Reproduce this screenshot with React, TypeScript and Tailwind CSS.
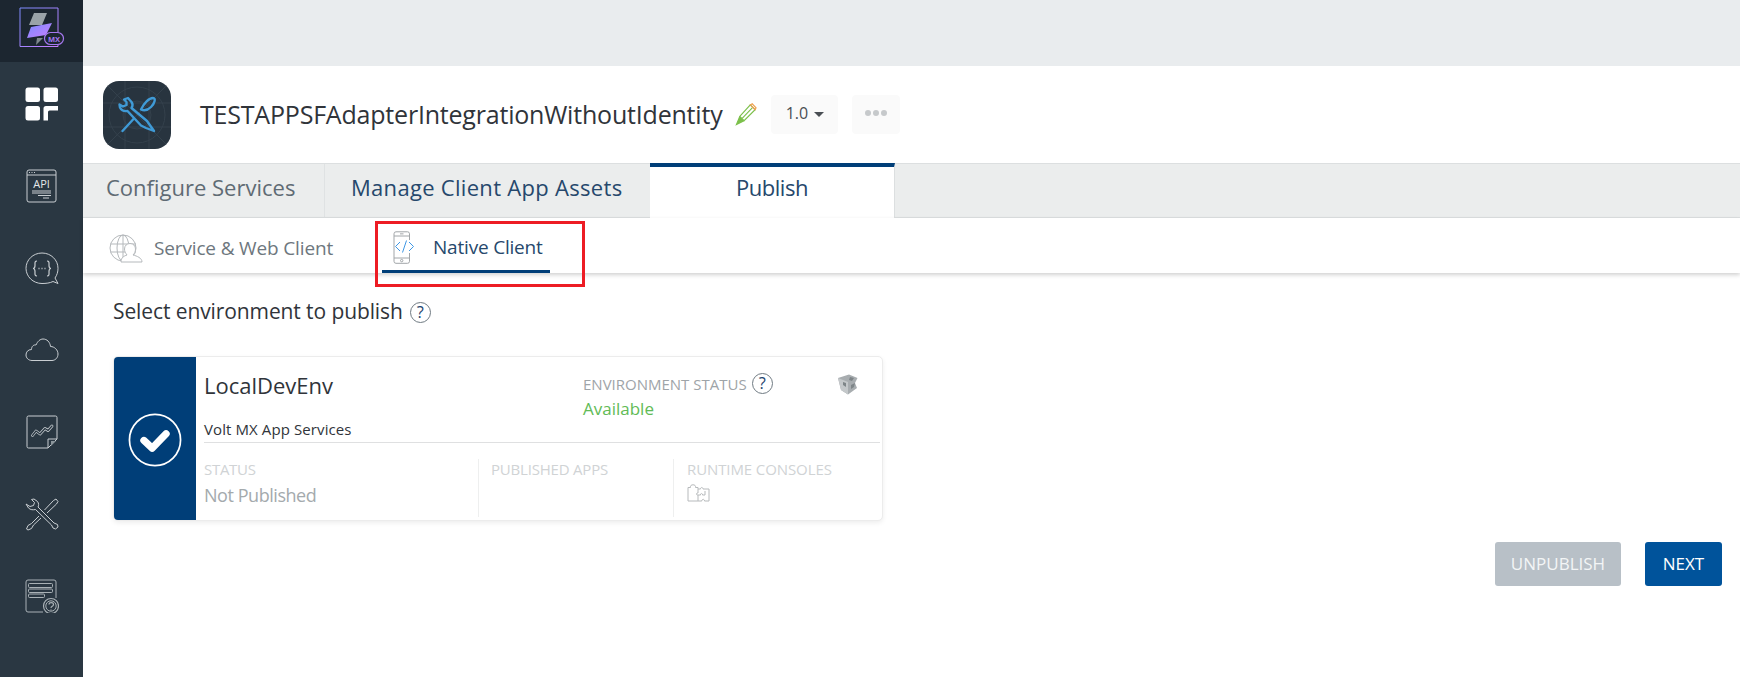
import React from "react";

const Stroke = "#c9ced2";

function Logo() {
  return (
    <svg width="46" height="42" viewBox="0 0 46 42" fill="none">
      <defs>
        <linearGradient id="lg" x1="0" y1="0" x2="1" y2="1">
          <stop offset="0" stopColor="#7c8cff" />
          <stop offset="1" stopColor="#c77dff" />
        </linearGradient>
      </defs>
      <path d="M1 1H39V27M39 38V39.500H1V1" stroke="url(#lg)" strokeWidth="1" />
      <path d="M15 6H28L23 18H10Z" fill="#9aa3a8" />
      <path d="M12 20L33 16L27 28L8 31Z" fill="url(#lg)" />
      <path d="M18 31H24L17 38Z" fill="#7f888d" />
      <rect x="25.500" y="25.500" width="19" height="12" rx="6" fill="#1c2630" stroke="#a678f0" strokeWidth="1.200" />
      <text x="35" y="34.500" textAnchor="middle" fontSize="7.500" fontWeight="700" fill="#a678f0" fontFamily="Open Sans">MX</text>
    </svg>
  );
}

function DashIcon() {
  return (
    <svg width="34" height="34" viewBox="0 0 34 34" fill="#fff">
      <rect x="0.500" y="0.500" width="14.500" height="14.500" rx="2.500" />
      <rect x="18.500" y="0.500" width="14.500" height="14.500" rx="2.500" />
      <rect x="0.500" y="19" width="14.500" height="14.500" rx="2.500" />
      <path d="M18.500 33.500V21.500a2.500 2.500 0 0 1 2.500-2.500H33v4.500H24.500a1.500 1.500 0 0 0-1.500 1.500v8.500Z" />
    </svg>
  );
}

function ApiIcon() {
  return (
    <svg width="32" height="34" viewBox="0 0 32 34" fill="none" stroke={Stroke} strokeWidth="1">
      <rect x="1" y="1" width="29" height="32" rx="2" />
      <path d="M1 6H30" />
      <path d="M3 3.500H4M5.500 3.500H6.500M8 3.500H9" strokeWidth="1.200" />
      <text x="15.500" y="19" textAnchor="middle" fontSize="11" fill="#e3e6e8" stroke="none" fontFamily="Open Sans">API</text>
      <path d="M6 22H25M6 24H25M12 26.500H25M17 29H23" />
    </svg>
  );
}

function BraceIcon() {
  return (
    <svg width="34" height="33" viewBox="0 0 34 33" fill="none" stroke={Stroke} strokeWidth="1">
      <path d="M33 31.500L28 29.500C25 31 21 31.500 17 31.500C8 31.500 1 24.500 1 16.250C1 8 8 1 17 1C26 1 33 8 33 16.250C33 20 32 23 30 26L33 31.500Z" />
      <path d="M12 9C9.500 9 10 11 10 13.500C10 15.500 9.500 16.500 8 16.500C9.500 16.500 10 17.500 10 19.500C10 22 9.500 24 12 24" strokeWidth="1.200" />
      <path d="M22 9C24.500 9 24 11 24 13.500C24 15.500 24.500 16.500 26 16.500C24.500 16.500 24 17.500 24 19.500C24 22 24.500 24 22 24" strokeWidth="1.200" />
      <path d="M13.500 16.500H14.500M16.500 16.500H17.500M19.500 16.500H20.500" strokeWidth="1.300" />
    </svg>
  );
}

function CloudIcon() {
  return (
    <svg width="34" height="24" viewBox="0 0 34 24" fill="none" stroke={Stroke} strokeWidth="1">
      <path d="M7 22.500C3.500 22.500 1 20 1 17C1 14 3 11.500 6.500 11.500C6.500 8 9 6.500 11 7C12.500 3.500 15 1 18 1C22 1 25 4 25.500 8.500C29.500 8.500 33 12 33 16C33 20 30 22.500 27 22.500Z" />
    </svg>
  );
}

function ReportIcon() {
  return (
    <svg width="32" height="34" viewBox="0 0 32 34" fill="none" stroke={Stroke} strokeWidth="1">
      <path d="M22 33H2.500A1.500 1.500 0 0 1 1 31.500V2.500A1.500 1.500 0 0 1 2.500 1H29.500A1.500 1.500 0 0 1 31 2.500V24Z" />
      <path d="M22 33V24H31" />
      <path d="M25 31L30 26H25Z" fill="#8b959b" stroke="none" />
      <path d="M6.500 20.500L10 16L14 19L19 13.500L22 15.500L26 11" strokeWidth="2.800" stroke="#c9ced2" strokeLinejoin="round" strokeLinecap="round" />
      <path d="M6.500 20.500L10 16L14 19L19 13.500L22 15.500L26 11" strokeWidth="1.300" stroke="#2a3742" strokeLinejoin="round" strokeLinecap="round" />
    </svg>
  );
}

function ToolsIcon() {
  return (
    <svg width="34" height="34" viewBox="0 0 34 34" fill="none" stroke={Stroke} strokeWidth="1" strokeLinejoin="round">
      <path d="M9 2L12.500 4.500C14 6.500 13.800 8.500 13 10L29 26L32.500 27.500L33 30L30.500 32L28 31L26.500 28L10.500 12.500C8 13 5.500 13 3.500 11L1 7L5 9.500L8.500 8.500L9.500 5.500L6.500 2.500Z" />
      <path d="M19.500 13L28.500 3.500L31 2L33 4.500L31.500 7L22 16" />
      <path d="M14 19L6.500 26.500L3 28.500L1.500 32L3 33L6.500 31.500L8.500 28L16 21" />
    </svg>
  );
}

function HelpCardIcon() {
  return (
    <svg width="34" height="34" viewBox="0 0 34 34" fill="none" stroke="#a9b1b6" strokeWidth="1">
      <path d="M18 33H3A2 2 0 0 1 1 31V3A2 2 0 0 1 3 1H29A2 2 0 0 1 31 3V19" />
      <rect x="3.500" y="4.500" width="24" height="4" rx="1" />
      <rect x="3.500" y="10" width="24" height="3.500" rx="1" />
      <rect x="3.500" y="15" width="16" height="3.500" rx="1" />
      <circle cx="26" cy="27" r="7.500" strokeWidth="1.200" />
      <circle cx="26" cy="27" r="5.200" />
      <path d="M24 25.500C24 23 28.500 23 28.500 25.500C28.500 27.500 26 27 26 29M26 30.500V31.500" strokeWidth="1.200" />
    </svg>
  );
}

function AppIcon() {
  return (
    <div className="flex h-[68px] w-[68px] items-center justify-center overflow-hidden rounded-[16px] bg-[#28343f]">
      <svg width="68" height="68" viewBox="0 0 68 68" fill="none">
        <g stroke="#34414c" strokeWidth="1">
          <circle cx="34" cy="34" r="28" />
          <circle cx="34" cy="34" r="14" />
          <path d="M0 22H68M0 46H68M22 0V68M46 0V68M0 0L68 68M68 0L0 68" />
        </g>
        <g stroke="#3f9ad6" strokeWidth="2.400" strokeLinejoin="round" strokeLinecap="round">
          <path d="M25 17L28.500 21C30 23 29.500 25.500 28.500 27L44 40L51 50L43 47L38 44.500L24.500 30C21.500 30.500 18.500 29.500 17 26.500L16.500 23.500L20 25.500L23.500 24L23.500 21L21 18.500Z" />
          <path d="M38 28.500C41 22 46 17 50 17C53 17 52 22 48 26C45 29 42 30.500 38 28.500Z" />
          <path d="M30.500 38L19.500 50" />
        </g>
      </svg>
    </div>
  );
}

function Pencil() {
  return (
    <svg width="22" height="23" viewBox="0 0 23 24" fill="none" strokeWidth="1.200">
      <path d="M5 14L16 2L21 7L9.500 18.500Z" stroke="#7cc04b" />
      <path d="M5 14L1.500 22.500L9.500 18.500" stroke="#7cc04b" fill="#7cc04b" />
      <path d="M7.500 16L18 5" stroke="#7cc04b" />
      <path d="M16 2L18 0.800L22 5L21 7Z" stroke="#f0a050" />
    </svg>
  );
}

function HelpCircle({ size = 22, color = "#6f7a82" }: { size?: number; color?: string }) {
  return (
    <span
      className="inline-flex shrink-0 items-center justify-center rounded-full border-[1.500px] bg-white font-['Open_Sans'] text-[#1f4570]"
      style={{ width: size, height: size, borderColor: color, fontSize: size * 0.78 }}
    >
      ?
    </span>
  );
}

function GlobeUser() {
  return (
    <svg width="34" height="29" viewBox="0 0 34 29" fill="none" stroke="#b5b9bc" strokeWidth="1">
      <circle cx="14" cy="14" r="13" />
      <ellipse cx="14" cy="14" rx="6" ry="13" />
      <path d="M14 1V27M1.500 10H27M1.500 18H20" />
      <path d="M12 28C12 23.500 15 22 18 21C16.500 19 15.500 17.500 15.500 15C15.500 11.500 18 9.500 21 9.500C24.500 9.500 26.500 12 26.500 15C26.500 17.500 25.500 19.500 24 21C28 22 33 24 33 28Z" fill="#fff" />
    </svg>
  );
}

function PhoneCode() {
  return (
    <svg width="24" height="33" viewBox="0 0 24 33" fill="none">
      <rect x="1" y="0.800" width="15.500" height="31.500" rx="2" stroke="#a2a6a9" strokeWidth="1" fill="#fff" />
      <path d="M1 5H16.500M1 27H16.500" stroke="#a2a6a9" strokeWidth="1" />
      <circle cx="8.700" cy="29.600" r="1.200" stroke="#a2a6a9" />
      <rect x="7" y="2.500" width="3.500" height="0.800" fill="#8a8e91" />
      <rect x="2" y="9" width="21" height="13" fill="#fff" />
      <path d="M7 11L2.500 15.500L7 20M16 11L20.500 15.500L16 20M13.500 9.500L9.500 21.500" stroke="#3f97e4" strokeWidth="1" />
    </svg>
  );
}

function CheckCircle() {
  return (
    <svg width="54" height="54" viewBox="0 0 56 56" fill="none">
      <circle cx="28" cy="28" r="26.500" stroke="#fff" strokeWidth="1.800" />
      <path d="M16.500 28.500L25 36.500L39.500 21.500" stroke="#fff" strokeWidth="7.500" strokeLinejoin="round" strokeLinecap="round" />
    </svg>
  );
}

function GlobeCube() {
  return (
    <svg width="21" height="21" viewBox="0 0 21 21">
      <path d="M1 4L12 0.500L20.500 4L18 9L20 14L11 20.500L4 16Z" fill="#a8adb0" />
      <path d="M1 4L11 8L11 20.500L4 16Z" fill="#c4c8ca" />
      <path d="M6 8L9 9L9 13L6 11ZM13 3L17 4L15 7L12 6ZM14 11L18 9L17 13L14 15Z" fill="#7e8588" />
    </svg>
  );
}

function Puzzle() {
  return (
    <svg width="23" height="18" viewBox="0 0 23 18" fill="none" stroke="#b7babc" strokeWidth="1">
      <path d="M1 3.500H3.500C3 1.500 4.500 0.800 6 0.800C7.500 0.800 9 1.500 8.500 3.500H11V5H13.500C13.500 3 16 3 16 5H22V17H17.500C17.800 14.800 14.500 14.800 14.800 17H1Z" />
      <path d="M11 5V9C9 8.500 9 11.500 11 11V17M11 11H13.500C13 9 16 9 15.500 11H18V7" />
    </svg>
  );
}

function SideItem({ children }: { children: React.ReactNode }) {
  return <div className="flex h-[82px] items-center justify-center">{children}</div>;
}

export default function App() {
  return (
    <div className="flex h-[677px] w-[1740px] overflow-hidden bg-white font-['Open_Sans',sans-serif]">
      <aside className="flex h-full w-[83px] shrink-0 flex-col bg-[#2a3742]">
        <div className="flex h-[62px] items-center justify-center bg-[#1c2630] pb-[6px]">
          <Logo />
        </div>
        <div className="h-px" />
        <SideItem><DashIcon /></SideItem>
        <SideItem><ApiIcon /></SideItem>
        <SideItem><BraceIcon /></SideItem>
        <SideItem><CloudIcon /></SideItem>
        <SideItem><ReportIcon /></SideItem>
        <SideItem><ToolsIcon /></SideItem>
        <SideItem><HelpCardIcon /></SideItem>
      </aside>

      <main className="relative flex min-w-0 flex-1 flex-col">
        <div className="h-[66px] shrink-0 bg-[#e9ecee]" />

        <header className="flex h-[97px] shrink-0 items-center pl-[20px]">
          <AppIcon />
          <h1 className="ml-[29px] text-[25px] font-normal tracking-[-0.2px] text-[#30343a]">
            TESTAPPSFAdapterIntegrationWithoutIdentity
          </h1>
          <span className="ml-[13px]"><Pencil /></span>
          <div className="ml-[14px] flex h-[39px] w-[67px] items-center justify-center gap-[6px] rounded-[4px] bg-[#fafafa] pb-[3px] text-[16px] text-[#4a4f54]">
            1.0
            <span className="mt-[2px] h-0 w-0 border-x-[5px] border-t-[5px] border-x-transparent border-t-[#4a4f54]" />
          </div>
          <div className="ml-[14px] flex h-[39px] w-[48px] items-center justify-center gap-[2px] rounded-[4px] bg-[#fafafa] pb-[4px]">
            <span className="h-[6px] w-[6px] rounded-full bg-[#c6c9cb]" />
            <span className="h-[6px] w-[6px] rounded-full bg-[#c6c9cb]" />
            <span className="h-[6px] w-[6px] rounded-full bg-[#c6c9cb]" />
          </div>
        </header>

        <nav className="flex h-[55px] shrink-0 border-y border-[#dcdfe0] bg-[#ebeded]">
          <div className="flex w-[242px] items-center border-r border-[#dfe2e3] pb-[6px] pl-[23px] text-[22px] text-[#5f6b74]">
            Configure Services
          </div>
          <div className="flex w-[325px] items-center pb-[6px] pl-[26px] text-[22px] tracking-[0.3px] text-[#26486c]">
            Manage Client App Assets
          </div>
          <div className="-mt-px flex h-[55px] w-[245px] items-center justify-center border-r border-t-[4px] border-r-[#dcdfe0] border-t-[#003e78] bg-white pb-[10px] text-[22px] tracking-[-0.5px] text-[#26486c]">
            Publish
          </div>
        </nav>

        <div className="z-10 flex h-[55px] shrink-0 items-center bg-white shadow-[0_2px_4px_rgba(0,0,0,0.18)]">
          <div className="flex w-[299px] items-center pl-[26px] pt-[6px]">
            <GlobeUser />
            <span className="ml-[11px] text-[19px] tracking-[-0.15px] text-[#6e777e]">Service &amp; Web Client</span>
          </div>
          <div className="flex h-full w-[168px] items-center border-b-[3px] border-[#003e78] pl-[11px] pt-[7px]">
            <PhoneCode />
            <span className="ml-[16px] text-[19px] tracking-[-0.2px] text-[#26486c]">Native Client</span>
          </div>
        </div>

        <section className="flex flex-1 flex-col pl-[30px] pr-[18px]">
          <div className="mt-[23px] flex items-center">
            <span className="text-[21px] tracking-[-0.1px] text-[#30343a]">Select environment to publish</span>
            <span className="ml-[7px]"><HelpCircle size={21} /></span>
          </div>

          <div className="mt-[28px] flex h-[165px] w-[770px] overflow-hidden rounded-[5px] border border-[#ececec] bg-white shadow-[0_2px_5px_rgba(0,0,0,0.07)]">
            <div className="flex w-[82px] shrink-0 items-center justify-center bg-[#003e78] pt-[4px]">
              <CheckCircle />
            </div>
            <div className="flex min-w-0 flex-1 flex-col pl-[8px] pr-[2px]">
              <div className="flex h-[86px] shrink-0 border-b border-[#dfe0e1]">
                <div className="flex w-[379px] shrink-0 flex-col">
                  <span className="mt-[12px] text-[22px] text-[#30343a]">LocalDevEnv</span>
                  <span className="mt-[16px] text-[15px] tracking-[0.1px] text-[#30343a]">Volt MX App Services</span>
                </div>
                <div className="flex w-[254px] shrink-0 flex-col">
                  <div className="mt-[16px] flex items-center">
                    <span className="text-[15px] text-[#9ea4a8]">ENVIRONMENT STATUS</span>
                    <span className="ml-[5px] -mt-[2px]"><HelpCircle size={21} /></span>
                  </div>
                  <span className="mt-[1px] text-[17px] text-[#61bb56]">Available</span>
                </div>
                <div className="mt-[17px]"><GlobeCube /></div>
              </div>
              <div className="flex flex-1 pt-[16px]">
                <div className="flex h-[58px] w-[275px] shrink-0 flex-col border-r border-[#eeefef]">
                  <span className="-mt-[1px] text-[15px] tracking-[-0.3px] text-[#d0d3d5]">STATUS</span>
                  <span className="mt-[2px] text-[18px] tracking-[-0.45px] text-[#a4aaad]">Not Published</span>
                </div>
                <div className="flex h-[58px] w-[195px] shrink-0 flex-col border-r border-[#eeefef] pl-[12px]">
                  <span className="-mt-[1px] text-[15px] tracking-[-0.2px] text-[#d0d3d5]">PUBLISHED APPS</span>
                </div>
                <div className="flex flex-col pl-[13px]">
                  <span className="-mt-[1px] text-[15px] tracking-[-0.1px] text-[#d0d3d5]">RUNTIME CONSOLES</span>
                  <span className="mt-[4px]"><Puzzle /></span>
                </div>
              </div>
            </div>
          </div>

          <div className="mt-[21px] flex justify-end gap-[24px]">
            <button className="h-[44px] w-[126px] rounded-[3px] bg-[#b8c0c7] text-[17px] text-[#f3f5f6]">UNPUBLISH</button>
            <button className="h-[44px] w-[77px] rounded-[3px] bg-[#00539b] text-[17px] text-white">NEXT</button>
          </div>
        </section>

        <div className="absolute left-[292px] top-[221px] z-20 h-[66px] w-[210px] border-[3px] border-[#ed1c24]" />
      </main>
    </div>
  );
}
